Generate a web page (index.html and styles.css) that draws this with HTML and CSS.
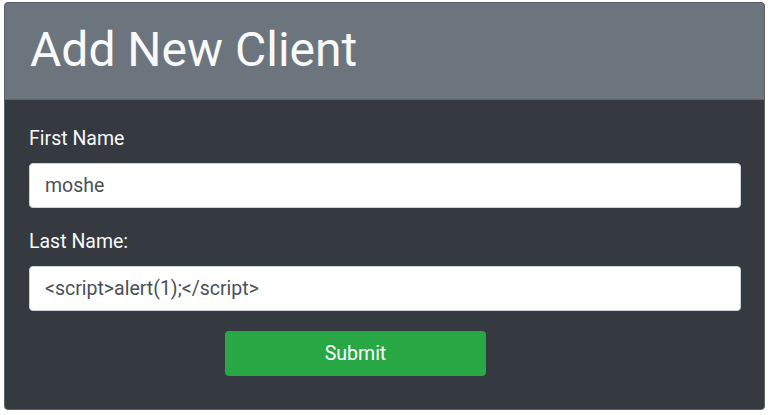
FILE: index.html
```html
<!DOCTYPE html>
<html>
<head>
<meta charset="utf-8">
<link rel="stylesheet" href="styles.css">
</head>
<body>
<div class="card">
  <div class="card-header"><h1 class="title">Add New Client</h1></div>
  <form class="card-body">
    <label class="label">First Name</label>
    <input class="field" type="text" value="moshe">
    <label class="label">Last Name:</label>
    <input class="field" type="text" value="&lt;script&gt;alert(1);&lt;/script&gt;">
    <div class="actions"><button class="submit" type="button">Submit</button></div>
  </form>
</div>
</body>
</html>
```
FILE: styles.css
```css
html, body { margin: 0; padding: 0; background: #fff; }
body { font-family: Roboto, "Noto Sans", sans-serif; padding: 2px 6px 0 4px; }
.card {
  width: 761px;
  height: 408px;
  box-sizing: border-box;
  border: 1px solid #5a6066;
  border-radius: 4px;
  background: #343a40;
  overflow: hidden;
  display: flex;
  flex-direction: column;
}
.card-header {
  background: #6c757d;
  height: 97px;
  border-bottom: 1px solid #5d646b;
  box-sizing: border-box;
  display: flex;
  align-items: center;
  padding-left: 25px;
}
.title {
  margin: 0;
  color: #f8f9fa;
  font-weight: 400;
  font-size: 48px;
  line-height: 1;
  position: relative;
  top: -1px;
}
.card-body {
  padding: 27px 23px 0 24px;
  display: flex;
  flex-direction: column;
}
.label {
  color: #f8f9fa;
  font-size: 19.5px;
  line-height: 24px;
  margin-bottom: 12px;
}
.field {
  height: 45px;
  box-sizing: border-box;
  border: 1px solid #ced4da;
  border-radius: 4px;
  background: #fff;
  padding: 0 15px;
  font-family: Roboto, "Noto Sans", sans-serif;
  font-size: 19.5px;
  color: #495057;
  margin-bottom: 22px;
  outline: none;
}
.actions { display: flex; padding-left: 196px; margin-top: -2px; }
.submit {
  width: 261px;
  height: 45px;
  border: none;
  border-radius: 4px;
  background: #28a745;
  color: #fff;
  font-family: Roboto, "Noto Sans", sans-serif;
  font-size: 19.5px;
}
```
